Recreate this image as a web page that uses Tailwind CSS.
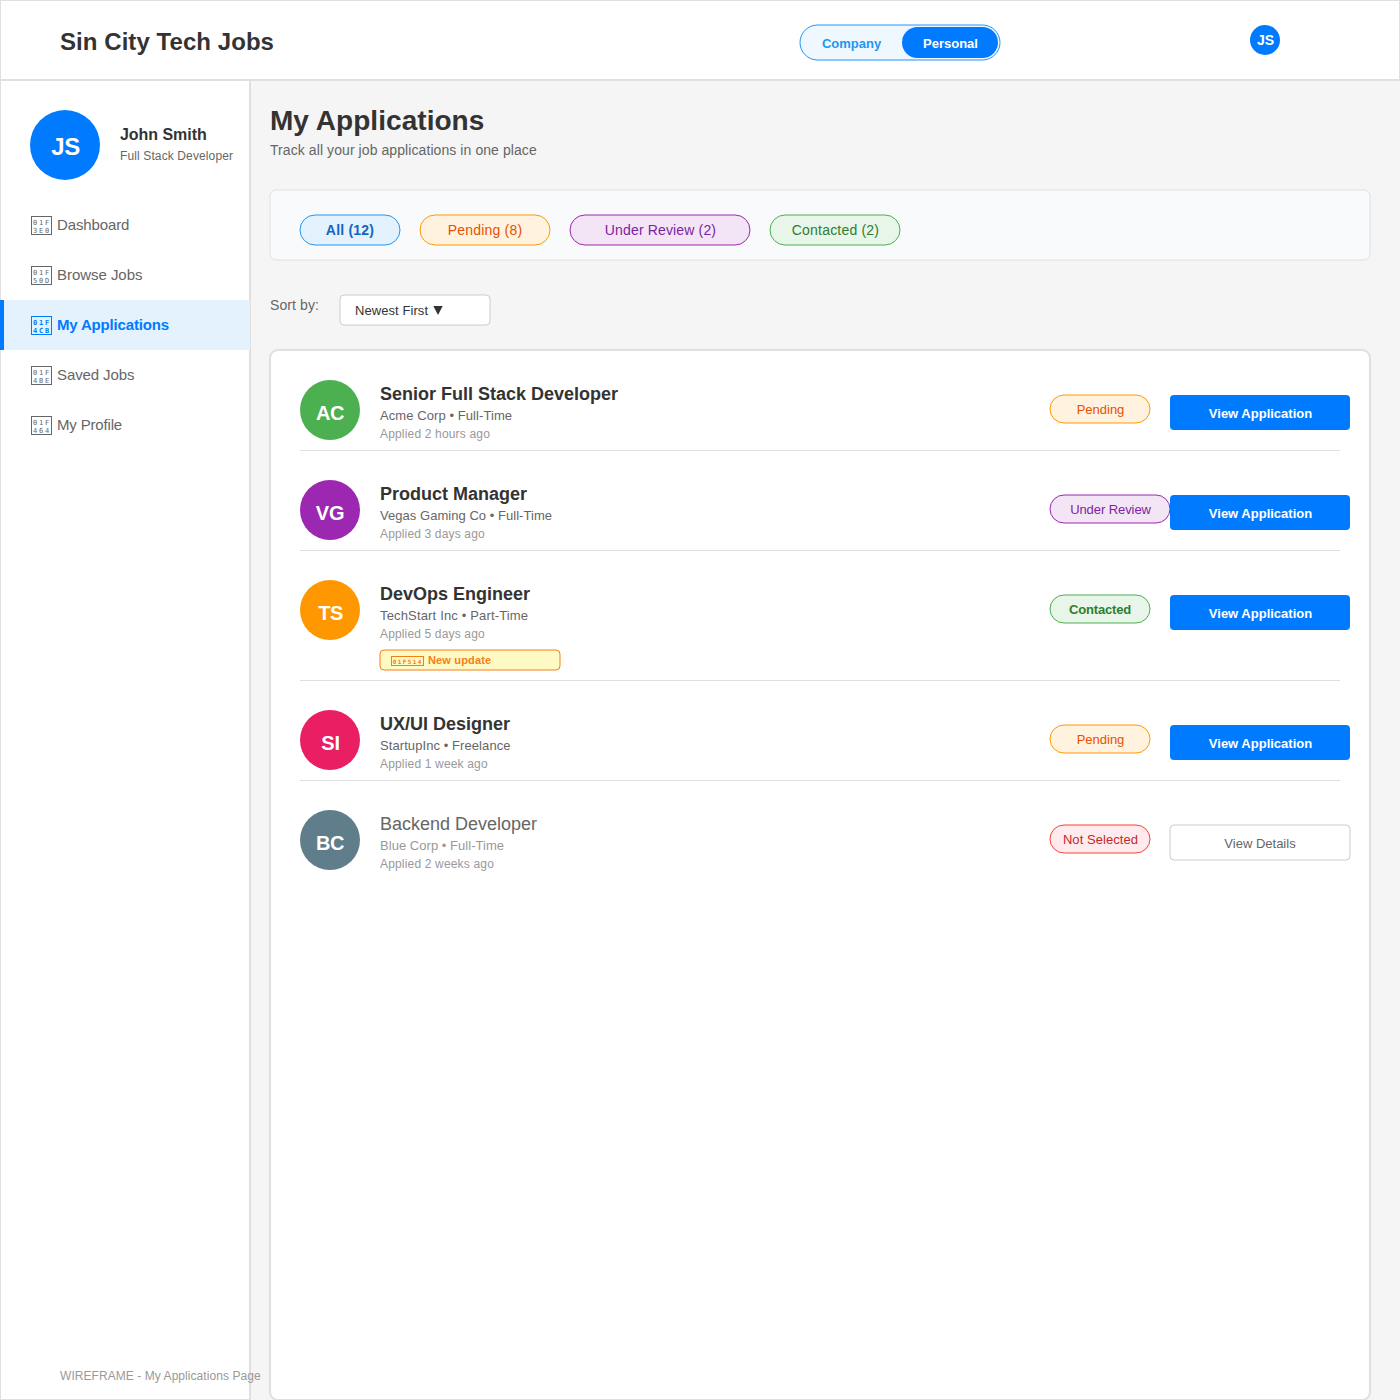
<!DOCTYPE html>
<html lang="en">
<head>
<meta charset="utf-8">
<title>My Applications - Sin City Tech Jobs</title>
<script src="https://cdn.jsdelivr.net/npm/@tailwindcss/browser@4"></script>
</head>
<body class="h-[1400px] w-[1400px] overflow-hidden bg-[#f5f5f5] font-['Liberation_Sans',Arial,sans-serif] text-[#333] whitespace-nowrap">

<!-- Header -->
<header class="flex h-[81px] items-start border border-b-2 border-[#e0e0e0] bg-white">
  <div class="mt-[27px] ml-[59px] w-[740px] text-[24px] leading-[27px] font-bold tracking-[0.06px]">Sin City Tech Jobs</div>
  <div class="relative mt-6 flex h-[35px] w-[200px] items-start text-[13px] leading-[15px] font-bold">
    <svg class="absolute inset-0 size-full overflow-visible"><rect width="200" height="35" rx="17.5" class="fill-[#f0f8ff] stroke-[#2196f3]"/></svg>
    <div class="relative w-[102px] pt-[11px] pl-px text-center text-[#2196f3]">Company</div>
    <div class="relative mt-0.5 h-[31px] w-24 rounded-full bg-[#007bff] pt-[9px] pl-px text-center text-white">Personal</div>
  </div>
  <div class="mt-6 ml-[250px] h-[30px] w-[30px] rounded-full bg-[#007bff] pt-[7px] pl-px text-center text-[14px] leading-4 font-bold text-white">JS</div>
</header>

<div class="flex">
  <!-- Sidebar -->
  <aside class="relative z-10 flex h-[1319px] w-[251px] shrink-0 flex-col border-r-2 border-b border-l border-[#e0e0e0] bg-white">
    <div class="mt-[29px] ml-[29px] flex h-[70px] items-start">
      <div class="h-[70px] w-[70px] rounded-full bg-[#007bff] pt-[23px] pl-px text-center text-[24px] leading-[27px] font-bold tracking-[-0.5px] text-white">JS</div>
      <div class="ml-5 pt-4">
        <div class="text-[16px] leading-[17px] font-bold tracking-[-0.04px]">John Smith</div>
        <div class="mt-1.5 text-[12px] leading-[14px] tracking-[0.12px] text-[#666]">Full Stack Developer</div>
      </div>
    </div>
    <nav class="mt-5 -ml-px w-[250px] text-[15px] leading-[17px] text-[#666]">
      <a class="flex h-[50px] items-start gap-[5px] pt-4 pl-[31px]">
        <svg class="h-[19px] w-[21px] fill-current font-['DejaVu_Sans_Mono',monospace] text-[7px]" viewBox="0 0 21 19"><rect x=".5" y=".5" width="20" height="18" fill="none" stroke="currentColor"/><text x="1.9 7.9 13.9" y="9">01F</text><text x="1.9 7.9 13.9" y="17">3E0</text></svg>
        <span class="tracking-[-0.12px]">Dashboard</span>
      </a>
      <a class="flex h-[50px] items-start gap-[5px] pt-4 pl-[31px]">
        <svg class="h-[19px] w-[21px] fill-current font-['DejaVu_Sans_Mono',monospace] text-[7px]" viewBox="0 0 21 19"><rect x=".5" y=".5" width="20" height="18" fill="none" stroke="currentColor"/><text x="1.9 7.9 13.9" y="9">01F</text><text x="1.9 7.9 13.9" y="17">50D</text></svg>
        <span class="tracking-[-0.04px]">Browse Jobs</span>
      </a>
      <a class="flex h-[50px] items-start gap-[5px] border-l-4 border-[#007bff] bg-[#e3f2fd] pt-4 pl-[27px] font-bold text-[#007bff]">
        <svg class="h-[19px] w-[21px] fill-current font-['DejaVu_Sans_Mono',monospace] text-[7px]" viewBox="0 0 21 19"><rect x=".5" y=".5" width="20" height="18" fill="none" stroke="currentColor"/><text x="1.9 7.9 13.9" y="9">01F</text><text x="1.9 7.9 13.9" y="17">4CB</text></svg>
        <span class="tracking-[-0.17px]">My Applications</span>
      </a>
      <a class="flex h-[50px] items-start gap-[5px] pt-4 pl-[31px]">
        <svg class="h-[19px] w-[21px] fill-current font-['DejaVu_Sans_Mono',monospace] text-[7px]" viewBox="0 0 21 19"><rect x=".5" y=".5" width="20" height="18" fill="none" stroke="currentColor"/><text x="1.9 7.9 13.9" y="9">01F</text><text x="1.9 7.9 13.9" y="17">4BE</text></svg>
        <span class="tracking-[-0.1px]">Saved Jobs</span>
      </a>
      <a class="flex h-[50px] items-start gap-[5px] pt-4 pl-[31px]">
        <svg class="h-[19px] w-[21px] fill-current font-['DejaVu_Sans_Mono',monospace] text-[7px]" viewBox="0 0 21 19"><rect x=".5" y=".5" width="20" height="18" fill="none" stroke="currentColor"/><text x="1.9 7.9 13.9" y="9">01F</text><text x="1.9 7.9 13.9" y="17">464</text></svg>
        <span class="tracking-[-0.17px]">My Profile</span>
      </a>
    </nav>
    <div class="mt-auto mb-4 ml-[59px] text-[12px] leading-[14px] tracking-[0.06px] text-[#999]">WIREFRAME - My Applications Page</div>
  </aside>

  <!-- Main -->
  <main class="ml-[19px] w-[1100px] shrink-0 pt-6">
    <h1 class="text-[28px] leading-[31px] font-bold tracking-[0.05px]">My Applications</h1>
    <p class="mt-1.5 text-[14px] leading-4 tracking-[0.08px] text-[#666]">Track all your job applications in one place</p>

    <!-- Status filters -->
    <section class="relative mt-8 flex h-[70px] gap-5 px-[30px] pt-[25px] text-center text-[14px] leading-4">
      <svg class="absolute inset-0 size-full overflow-visible"><rect width="1100" height="70" rx="6" class="fill-[#f8fafc] stroke-[#e0e0e0]"/></svg>
      <div class="relative h-[30px] w-[100px] pt-[7px] font-bold tracking-[0.2px] text-[#1565c0]">
        <svg class="absolute inset-0 size-full overflow-visible"><rect width="100%" height="100%" rx="15" class="fill-[#e3f2fd] stroke-[#2196f3]"/></svg><span class="relative">All (12)</span></div>
      <div class="relative h-[30px] w-[130px] pt-[7px] tracking-[0.2px] text-[#e65100]">
        <svg class="absolute inset-0 size-full overflow-visible"><rect width="100%" height="100%" rx="15" class="fill-[#fff3e0] stroke-[#ff9800]"/></svg><span class="relative">Pending (8)</span></div>
      <div class="relative h-[30px] w-[180px] pt-[7px] pl-px tracking-[0.15px] text-[#7b1fa2]">
        <svg class="absolute inset-0 size-full overflow-visible"><rect width="100%" height="100%" rx="15" class="fill-[#f3e5f5] stroke-[#9c27b0]"/></svg><span class="relative">Under Review (2)</span></div>
      <div class="relative h-[30px] w-[130px] pt-[7px] pl-px tracking-[0.2px] text-[#2e7d32]">
        <svg class="absolute inset-0 size-full overflow-visible"><rect width="100%" height="100%" rx="15" class="fill-[#e8f5e9] stroke-[#4caf50]"/></svg><span class="relative">Contacted (2)</span></div>
    </section>

    <!-- Sort -->
    <div class="mt-[35px] flex h-[30px] items-start">
      <div class="w-[70px] pt-0.5 text-[14px] leading-4 tracking-[0.09px] text-[#666]">Sort by:</div>
      <div class="relative h-[30px] w-[150px] pt-2 pl-[15px] text-[13px] leading-[15px]">
        <svg class="absolute inset-0 size-full overflow-visible"><rect width="100%" height="100%" rx="4" class="fill-white stroke-[#ccc]"/></svg>
        <div class="relative flex gap-[5px]"><span class="tracking-[0.07px]">Newest First</span><svg class="mt-[3px] h-[9px] w-[10px]" viewBox="0 0 10 9"><path d="M.3 0h9.4L5 9z" fill="#333"/></svg></div>
      </div>
    </div>

    <!-- Applications -->
    <section class="mt-6 -ml-px h-[1052px] w-[1102px] rounded-[9px] border-2 border-[#e0e0e0] bg-white pl-[29px]">
      <article class="flex h-[100px] w-[1040px] items-start border-b border-[#e0e0e0] pt-[29px]">
        <div class="size-[60px] shrink-0 rounded-full bg-[#4caf50] pt-[22px] text-center text-[20px] leading-[22px] font-bold tracking-[-0.5px] text-white">AC</div>
        <div class="ml-5 w-[670px] shrink-0 pt-1">
          <h2 class="text-[18px] leading-5 font-bold">Senior Full Stack Developer</h2>
          <p class="mt-1 text-[13px] leading-[15px] tracking-[0.08px] text-[#666]">Acme Corp • Full-Time</p>
          <p class="mt-1 text-[12px] leading-[14px] tracking-[0.17px] text-[#999]">Applied 2 hours ago</p>
        </div>
        <div class="relative mt-[15px] h-7 w-[100px] shrink-0 pt-[7px] pl-px text-center text-[13px] leading-[15px] text-[#e65100]"><svg class="absolute inset-0 size-full overflow-visible"><rect width="100%" height="100%" rx="14" class="fill-[#fff3e0] stroke-[#ff9800]"/></svg><span class="relative">Pending</span></div>
        <div class="relative mt-[15px] ml-5 h-[35px] w-[180px] shrink-0 rounded-[4px] bg-[#007bff] pt-[11px] pl-px text-center text-[13px] leading-[15px] font-bold text-white">View Application</div>
      </article>

      <article class="flex h-[100px] w-[1040px] items-start border-b border-[#e0e0e0] pt-[29px]">
        <div class="size-[60px] shrink-0 rounded-full bg-[#9c27b0] pt-[22px] text-center text-[20px] leading-[22px] font-bold tracking-[-0.3px] text-white">VG</div>
        <div class="ml-5 w-[670px] shrink-0 pt-1">
          <h2 class="text-[18px] leading-5 font-bold">Product Manager</h2>
          <p class="mt-1 text-[13px] leading-[15px] tracking-[0.04px] text-[#666]">Vegas Gaming Co • Full-Time</p>
          <p class="mt-1 text-[12px] leading-[14px] tracking-[0.15px] text-[#999]">Applied 3 days ago</p>
        </div>
        <div class="relative mt-[15px] h-7 w-[120px] shrink-0 pt-[7px] pl-px text-center text-[13px] leading-[15px] tracking-[-0.08px] text-[#7b1fa2]"><svg class="absolute inset-0 size-full overflow-visible"><rect width="100%" height="100%" rx="14" class="fill-[#f3e5f5] stroke-[#9c27b0]"/></svg><span class="relative">Under Review</span></div>
        <div class="relative mt-[15px] h-[35px] w-[180px] shrink-0 rounded-[4px] bg-[#007bff] pt-[11px] pl-px text-center text-[13px] leading-[15px] font-bold text-white">View Application</div>
      </article>

      <article class="flex h-[130px] w-[1040px] items-start border-b border-[#e0e0e0] pt-[29px]">
        <div class="size-[60px] shrink-0 rounded-full bg-[#ff9800] pt-[22px] pl-px text-center text-[20px] leading-[22px] font-bold tracking-[-0.5px] text-white">TS</div>
        <div class="ml-5 w-[670px] shrink-0 pt-1">
          <h2 class="text-[18px] leading-5 font-bold">DevOps Engineer</h2>
          <p class="mt-1 text-[13px] leading-[15px] tracking-[0.16px] text-[#666]">TechStart Inc • Part-Time</p>
          <p class="mt-1 text-[12px] leading-[14px] tracking-[0.15px] text-[#999]">Applied 5 days ago</p>
          <div class="relative mt-[9px] h-5 w-[180px] text-[11px] leading-3 font-bold text-[#f57f17]">
            <svg class="absolute inset-0 size-full overflow-visible"><rect width="100%" height="100%" rx="4" class="fill-[#fff9c4] stroke-[#f57f17]"/></svg>
            <div class="relative flex items-start gap-1 pt-1 pl-[11px]">
              <svg class="mt-0.5 h-2.5 w-[33px] fill-current font-['DejaVu_Sans_Mono',monospace] text-[6px] font-bold" viewBox="0 0 33 10"><rect x=".5" y=".5" width="32" height="9" fill="none" stroke="currentColor"/><text x="1.8 6.8 11.8 16.8 21.8 26.8" y="8">01F514</text></svg>
              <span class="tracking-[0.15px]">New update</span>
            </div>
          </div>
        </div>
        <div class="relative mt-[15px] h-7 w-[100px] shrink-0 pt-[7px] text-center text-[13px] leading-[15px] font-bold tracking-[-0.15px] text-[#2e7d32]"><svg class="absolute inset-0 size-full overflow-visible"><rect width="100%" height="100%" rx="14" class="fill-[#e8f5e9] stroke-[#4caf50]"/></svg><span class="relative">Contacted</span></div>
        <div class="relative mt-[15px] ml-5 h-[35px] w-[180px] shrink-0 rounded-[4px] bg-[#007bff] pt-[11px] pl-px text-center text-[13px] leading-[15px] font-bold text-white">View Application</div>
      </article>

      <article class="flex h-[100px] w-[1040px] items-start border-b border-[#e0e0e0] pt-[29px]">
        <div class="size-[60px] shrink-0 rounded-full bg-[#e91e63] pt-[22px] pl-px text-center text-[20px] leading-[22px] font-bold tracking-[-0.3px] text-white">SI</div>
        <div class="ml-5 w-[670px] shrink-0 pt-1">
          <h2 class="text-[18px] leading-5 font-bold">UX/UI Designer</h2>
          <p class="mt-1 text-[13px] leading-[15px] tracking-[0.08px] text-[#666]">StartupInc • Freelance</p>
          <p class="mt-1 text-[12px] leading-[14px] tracking-[0.17px] text-[#999]">Applied 1 week ago</p>
        </div>
        <div class="relative mt-[15px] h-7 w-[100px] shrink-0 pt-[7px] pl-px text-center text-[13px] leading-[15px] text-[#e65100]"><svg class="absolute inset-0 size-full overflow-visible"><rect width="100%" height="100%" rx="14" class="fill-[#fff3e0] stroke-[#ff9800]"/></svg><span class="relative">Pending</span></div>
        <div class="relative mt-[15px] ml-5 h-[35px] w-[180px] shrink-0 rounded-[4px] bg-[#007bff] pt-[11px] pl-px text-center text-[13px] leading-[15px] font-bold text-white">View Application</div>
      </article>

      <article class="flex h-[100px] w-[1040px] items-start pt-[29px]">
        <div class="size-[60px] shrink-0 rounded-full bg-[#607d8b] pt-[22px] text-center text-[20px] leading-[22px] font-bold tracking-[-0.5px] text-white">BC</div>
        <div class="ml-5 w-[670px] shrink-0 pt-1">
          <h2 class="text-[18px] leading-5 text-[#666]">Backend Developer</h2>
          <p class="mt-1 text-[13px] leading-[15px] tracking-[0.04px] text-[#999]">Blue Corp • Full-Time</p>
          <p class="mt-1 text-[12px] leading-[14px] tracking-[0.17px] text-[#999]">Applied 2 weeks ago</p>
        </div>
        <div class="relative mt-[15px] h-7 w-[100px] shrink-0 pt-[7px] pl-px text-center text-[13px] leading-[15px] tracking-[0.06px] text-[#c62828]"><svg class="absolute inset-0 size-full overflow-visible"><rect width="100%" height="100%" rx="14" class="fill-[#ffebee] stroke-[#f44336]"/></svg><span class="relative">Not Selected</span></div>
        <div class="relative mt-[15px] ml-5 h-[35px] w-[180px] shrink-0 pt-[11px] text-center text-[13px] leading-[15px] text-[#666]"><svg class="absolute inset-0 size-full overflow-visible"><rect width="100%" height="100%" rx="4" class="fill-white stroke-[#ccc]"/></svg><span class="relative">View Details</span></div>
      </article>
    </section>
  </main>
</div>
</body>
</html>
